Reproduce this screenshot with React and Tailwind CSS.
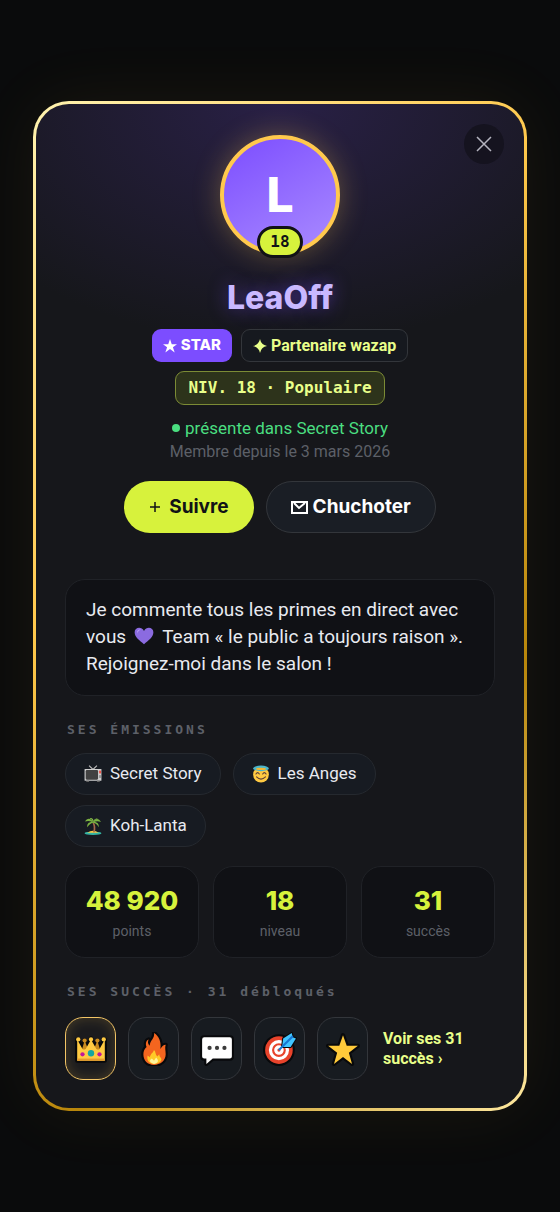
import React from 'react';

const Svg = ({ children, size = 18, className = '', viewBox = '0 0 32 32' }) => (
  <svg viewBox={viewBox} width={size} height={size} className={`shrink-0 ${className}`} aria-hidden="true">
    {children}
  </svg>
);

const Tv = () => (
  <Svg>
    <path d="M9 1l7 7 7-7" fill="none" stroke="#bdbdbd" strokeWidth="2" />
    <rect x="1" y="7" width="30" height="21" rx="1" fill="#cfcfcf" />
    <rect x="3" y="9" width="22" height="17" rx="2" fill="#424242" />
    <rect x="27" y="10" width="3" height="5" fill="#f44336" />
    <rect x="27" y="18" width="3" height="5" fill="#8d8d8d" />
    <path d="M4 28h5v2H4zM23 28h5v2h-5z" fill="#616161" />
  </Svg>
);

const Angel = () => (
  <Svg>
    <circle cx="16" cy="17" r="14" fill="#ffca42" />
    <ellipse cx="16" cy="6" rx="14" ry="5" fill="#4db6c9" />
    <ellipse cx="16" cy="7" rx="9" ry="2" fill="#f2b632" />
    <path d="M7 16q3-5 6 0M19 16q3-5 6 0" fill="none" stroke="#5d4037" strokeWidth="2" strokeLinecap="round" />
    <path d="M8 21q8 8 16 0" fill="none" stroke="#5d4037" strokeWidth="2" strokeLinecap="round" />
  </Svg>
);

const Palm = () => (
  <Svg>
    <ellipse cx="16" cy="29" rx="15" ry="3" fill="#35b6a5" />
    <path d="M6 28q10-7 20 0z" fill="#ffca42" />
    <path d="M15 10q4 8 1 17h3q3-9-1-17z" fill="#a9694a" />
    <path d="M16 9C12 1 5 2 2 8c5-2 9-1 12 1-6 0-9 4-8 9 3-5 6-7 10-8 5 1 8 3 10 8 1-5-2-9-8-9 4-2 8-2 12 0C27 2 20 1 16 9z" fill="#7cb342" />
    <path d="M16 9q-1-5-6-7 6-1 7 5 2-5 8-5-6 2-9 7z" fill="#8bc34a" />
  </Svg>
);

const Heart = () => (
  <Svg size={20} className="mx-2 inline-block align-[-3px]">
    <path d="M16 29C9 23 1 18 1 10 1 2 12 0 16 8c4-8 15-6 15 2 0 8-8 13-15 19z" fill="#8b6be0" />
    <path d="M5 12c-1-5 3-7 6-6-3 1-5 3-6 6z" fill="#b79cf5" />
  </Svg>
);

const Crown = () => (
  <Svg size={34}>
    <g fill="#08090b" stroke="#08090b" strokeWidth="4" strokeLinejoin="round">
      <path d="M3 27V7l6 9 1-8 3 7 3-9 3 9 3-7 1 8 6-9v20z" />
    </g>
    <path d="M7 18l3-10 4 10zM18 18l4-10 3 10z" fill="#c98a1e" />
    <circle cx="10" cy="8" r="2" fill="#c98a1e" />
    <circle cx="22" cy="8" r="2" fill="#c98a1e" />
    <path d="M3 27V7l5 9q1 1 3 0l5-9 5 9q2 1 3 0l5-9v20z" fill="#ffca42" />
    <circle cx="4" cy="7" r="2" fill="#ffca42" />
    <circle cx="16" cy="7" r="2" fill="#ffca42" />
    <circle cx="28" cy="7" r="2" fill="#ffca42" />
    <path d="M3 25h26v2H3z" fill="#e59a2e" />
    <circle cx="8" cy="21" r="2" fill="#c2189b" />
    <circle cx="16" cy="20" r="3" fill="#16a7a0" />
    <circle cx="24" cy="21" r="2" fill="#c2189b" />
  </Svg>
);

const Fire = () => (
  <Svg size={34}>
    <path
      d="M16 1c1 5-4 7-4 12-2-2-2-4-1-6-3 1-3 5-2 7-2 2-3 4-3 7 0 6 4 10 10 10s11-4 11-10c0-4-1-6 0-9-2 0-4 2-5 4 1-6-1-12-6-15z"
      fill="#f4651f"
      stroke="#08090b"
      strokeWidth="4"
      strokeLinejoin="round"
      paintOrder="stroke"
    />
    <path d="M15 30c-4-1-6-4-5-8 1 1 2 1 2 2 1-4 3-4 4-7 2 2 1 4 3 6l2-2c0 3 2 3 2 5-1 3-4 4-8 4z" fill="#ffca28" />
    <path d="M16 30c-4-1-5-3-2-5l2 2 2-3c3 3 2 5-2 6z" fill="#fff59d" />
  </Svg>
);

const Bubble = () => (
  <Svg size={34}>
    <path
      d="M4 5h24q2 0 2 2v16q0 2-2 2H12l-6 5v-5H4q-2 0-2-2V7q0-2 2-2z"
      fill="#fff"
      stroke="#08090b"
      strokeWidth="4"
      strokeLinejoin="round"
      paintOrder="stroke"
    />
    <circle cx="9" cy="15" r="2" fill="#3b3b3b" />
    <circle cx="16" cy="15" r="2" fill="#3b3b3b" />
    <circle cx="23" cy="15" r="2" fill="#3b3b3b" />
  </Svg>
);

const Target = () => (
  <Svg size={34}>
    <circle cx="15" cy="17" r="13" fill="#e8432b" stroke="#08090b" strokeWidth="4" paintOrder="stroke" />
    <circle cx="15" cy="17" r="8" fill="none" stroke="#fff" strokeWidth="3" />
    <circle cx="15" cy="17" r="3" fill="none" stroke="#fff" strokeWidth="3" />
    <path d="M18 14l1-8 8-5 1 4 3 1-5 8z" fill="#40c4ff" stroke="#08090b" strokeWidth="2" strokeLinejoin="round" paintOrder="stroke" />
    <path d="M15 17L28 4" stroke="#1976d2" strokeWidth="2" />
  </Svg>
);

const Star = () => (
  <Svg size={34}>
    <path
      d="M16 3l3.5 10H30l-8.5 6.5 3 10.5-8.5-6.5L7.500 30l3-10.500L2 13h10.500z"
      fill="#ffca3a"
      stroke="#08090b"
      strokeWidth="4"
      strokeLinejoin="round"
      paintOrder="stroke"
    />
  </Svg>
);

const shows = [
  { name: 'Secret Story', icon: <Tv /> },
  { name: 'Les Anges', icon: <Angel /> },
  { name: 'Koh-Lanta', icon: <Palm /> },
];

const stats = [
  { value: '48 920', label: 'points' },
  { value: '18', label: 'niveau' },
  { value: '31', label: 'succès' },
];

const badges = [
  { name: 'Couronne', icon: <Crown />, gold: true },
  { name: 'Flamme', icon: <Fire /> },
  { name: 'Bulle', icon: <Bubble /> },
  { name: 'Cible', icon: <Target /> },
  { name: 'Étoile', icon: <Star /> },
];

const SectionTitle = ({ children }) => (
  <h2 className="px-[2px] font-['DejaVu_Sans_Mono',monospace] text-[13px] leading-5 font-bold tracking-[3px] text-[#5d6068]">
    {children}
  </h2>
);

const App = () => {
  return (
    <div className="flex min-h-screen items-center justify-center bg-[#0a0b0c] px-[33px] py-[100px] font-['Roboto',sans-serif] text-[#e8eaf0]">
      <div className="w-full max-w-xl rounded-[36px] bg-[linear-gradient(135deg,#fff3b0_0%,#ffc94d_35%,#b8860b_70%,#ffe9a0_100%)] p-[3px] shadow-[0_0_70px_rgba(255,201,77,0.07)]">
        <main className="relative rounded-[33px] bg-[#16171b] bg-[radial-gradient(ellipse_75%_240px_at_50%_0%,#292046_0%,#16171b_100%)] bg-no-repeat px-[29px] pt-[31px] pb-7">
          <button
            type="button"
            aria-label="Fermer"
            className="absolute top-5 right-5 flex h-10 w-10 items-center justify-center rounded-full bg-[#15131f] text-[#b5b4bf]"
          >
            <Svg size={16} viewBox="0 0 16 16">
              <path d="M1 1l14 14M15 1L1 15" stroke="currentColor" strokeWidth="1.5" />
            </Svg>
          </button>

          <header className="flex flex-col items-center">
            <div className="relative flex h-[120px] w-[120px] items-center justify-center rounded-full border-4 border-[#ffc94d] bg-[linear-gradient(150deg,#7c4dff,#a98bff)] shadow-[0_0_28px_rgba(255,201,77,0.3)]">
              <span className="font-['Inter',sans-serif] text-5xl font-extrabold text-white">L</span>
              <span className="absolute -bottom-[7px] rounded-full border-3 border-[#111216] bg-[#d7f23c] px-[10px] font-['DejaVu_Sans_Mono',monospace] text-base leading-[26px] font-bold text-[#111216]">
                18
              </span>
            </div>

            <h1 className="mt-[23px] font-['Inter',sans-serif] text-[32px] leading-10 font-extrabold text-[#c9b8ff] [text-shadow:0_0_18px_rgba(124,77,255,0.5)]">
              LeaOff
            </h1>

            <div className="mt-[11px] flex flex-wrap justify-center gap-[9px]">
              <span className="flex h-[33px] items-center gap-1 rounded-[9px] bg-[#7c4dff] px-[11px] font-['Inter',sans-serif] text-[15px] font-extrabold text-white">
                <Svg size={14} viewBox="0 0 24 24">
                  <path d="M12 0l3 9h9l-7 5 3 9-8-6-8 6 3-9-7-5h9z" fill="currentColor" />
                </Svg>
                STAR
              </span>
              <span className="flex h-[33px] items-center gap-1 rounded-[9px] border border-[#33363b] bg-[#16191f] px-[11px] text-base font-bold text-[#e9ff8a]">
                <Svg size={14} viewBox="0 0 24 24">
                  <path d="M12 0q2 10 12 12-10 2-12 12Q10 14 0 12 10 10 12 0z" fill="currentColor" />
                </Svg>
                Partenaire wazap
              </span>
              <span className="flex h-[34px] items-center rounded-[9px] border border-[#7c8b35] bg-[#2d331b] px-3 font-['DejaVu_Sans_Mono',monospace] text-base font-bold text-[#e9ff8a]">
                NIV. 18 · Populaire
              </span>
            </div>

            <p className="mt-[11px] flex items-center gap-[5px] text-[17px] leading-6 text-[#4ade80]">
              <span className="h-2 w-2 rounded-full bg-[#4ade80]" />
              présente dans Secret Story
            </p>
            <p className="text-base leading-6 text-[#5d6068]">Membre depuis le 3 mars 2026</p>

            <div className="mt-[17px] flex gap-3 font-['Inter',sans-serif] text-[19px] font-bold">
              <button type="button" className="flex h-[52px] items-center gap-2 rounded-full bg-[#d7f23c] px-[25px] text-[#111216]">
                <Svg size={12} viewBox="0 0 12 12">
                  <path d="M6 1v10M1 6h10" stroke="currentColor" strokeWidth="1.5" />
                </Svg>
                Suivre
              </button>
              <button type="button" className="flex h-[52px] items-center gap-[5px] rounded-full border border-[#33363b] bg-[#1a1e25] px-6 text-white">
                <Svg size={17} viewBox="0 0 17 17">
                  <path d="M1 3h15v11H1z" fill="none" stroke="currentColor" strokeWidth="2" />
                  <path d="M3 4l5 5 6-5" fill="none" stroke="currentColor" strokeWidth="2" />
                </Svg>
                Chuchoter
              </button>
            </div>
          </header>

          <p className="mt-[46px] rounded-[20px] border border-[#202227] bg-[#101115] px-5 pt-4 pb-[18px] text-[19px] leading-[27px]">
            Je commente tous les primes en direct avec <span>vous</span>
            <Heart />
            <span>Team « le public a toujours raison ».</span> Rejoignez-moi dans le salon !
          </p>

          <section className="mt-6">
            <SectionTitle>SES ÉMISSIONS</SectionTitle>
            <ul className="mt-[13px] flex flex-wrap gap-x-3 gap-y-[10px]">
              {shows.map((show) => (
                <li key={show.name} className="flex h-[42px] items-center gap-2 rounded-full border border-[#25292f] bg-[#171b22] px-[18px] text-[17px]">
                  {show.icon}
                  {show.name}
                </li>
              ))}
            </ul>
          </section>

          <dl className="mt-[19px] grid grid-cols-3 gap-[14px]">
            {stats.map((stat) => (
              <div key={stat.label} className="flex flex-col-reverse items-center rounded-[20px] border border-[#202227] bg-[#101115] pt-[18px] pb-4">
                <dt className="mt-1 text-sm leading-5 text-[#5d6068]">{stat.label}</dt>
                <dd className="font-['Inter',sans-serif] text-[26px] leading-8 font-extrabold text-[#d7f23c]">{stat.value}</dd>
              </div>
            ))}
          </dl>

          <section className="mt-6">
            <SectionTitle>SES SUCCÈS · 31 débloqués</SectionTitle>
            <div className="mt-[15px] flex items-center gap-3">
              {badges.map((badge) => (
                <span
                  key={badge.name}
                  role="img"
                  aria-label={badge.name}
                  className={
                    badge.gold
                      ? 'flex h-[63px] w-[51px] shrink-0 items-center justify-center rounded-[18px] border border-[#f3c566] bg-[#1b1b1e] shadow-[inset_0_0_14px_rgba(255,201,77,0.2)]'
                      : 'flex h-[63px] w-[51px] shrink-0 items-center justify-center rounded-[18px] border border-[#33363b] bg-[#171b20]'
                  }
                >
                  {badge.icon}
                </span>
              ))}
              <a href="#succes" className="ml-[3px] text-base leading-5 font-bold text-[#e9ff8a]">
                Voir ses 31 succès ›
              </a>
            </div>
          </section>
        </main>
      </div>
    </div>
  );
};

export default App;
